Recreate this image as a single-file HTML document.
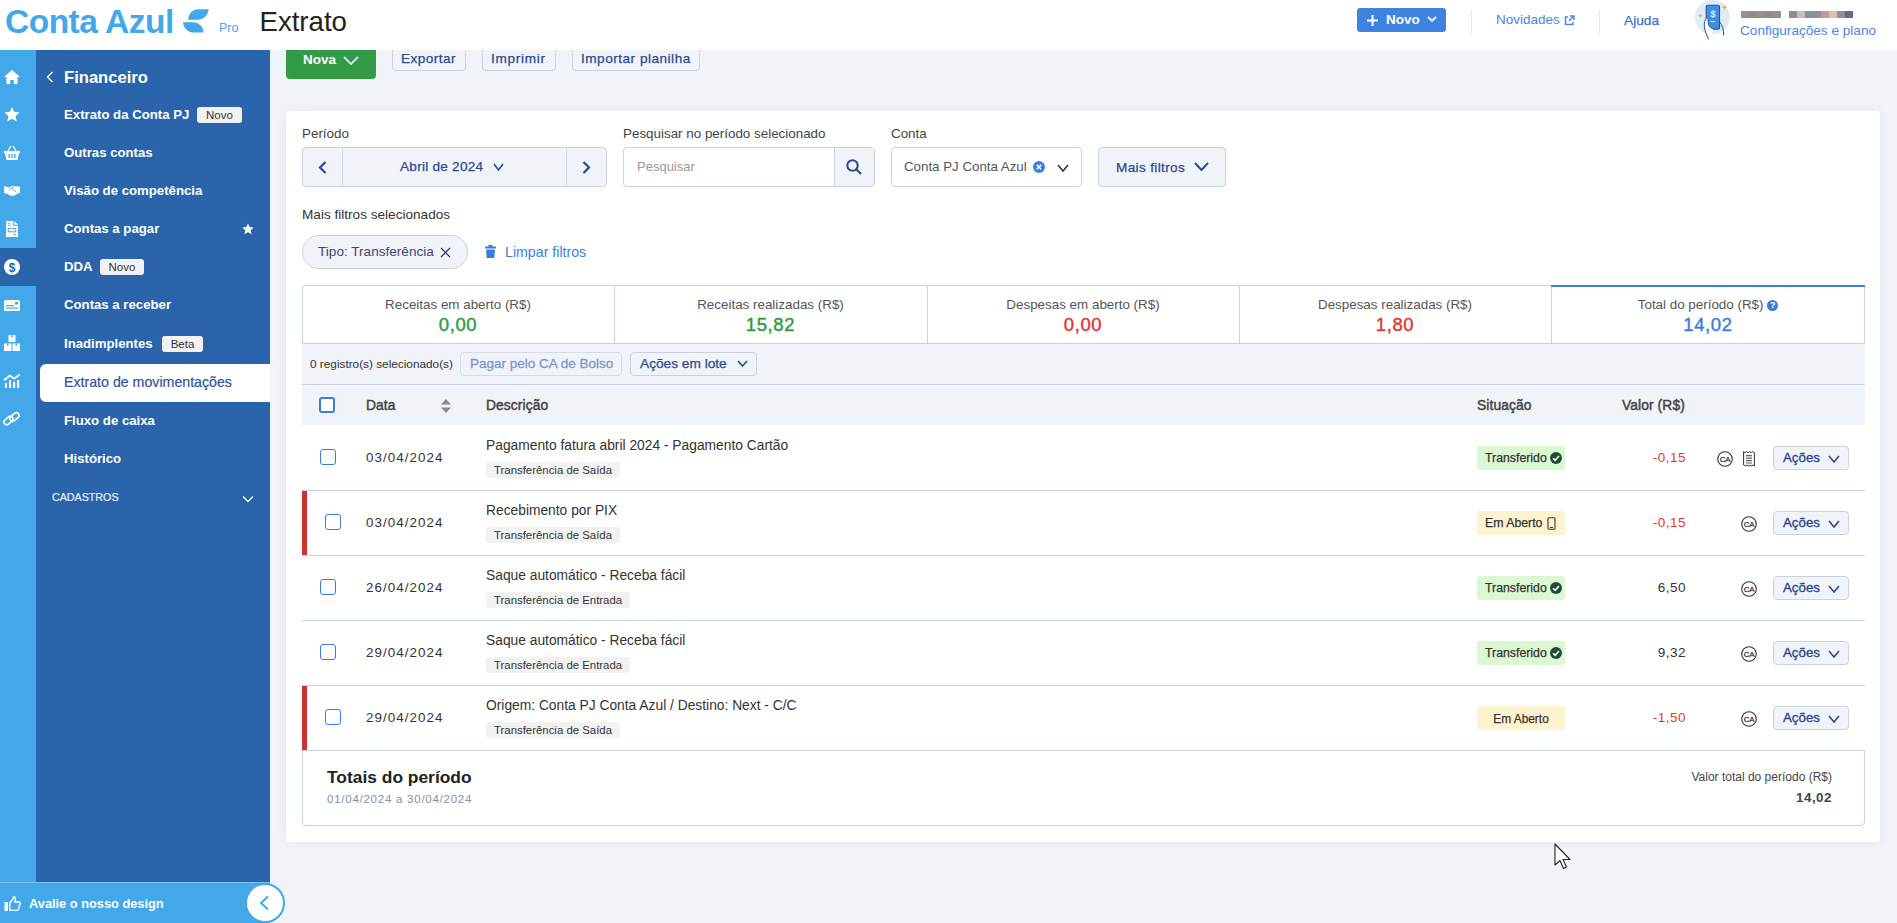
<!DOCTYPE html>
<html><head><meta charset="utf-8">
<style>
*{box-sizing:border-box;margin:0;padding:0}
html,body{width:1897px;height:923px;overflow:hidden;background:#f0f3f8;font-family:"Liberation Sans",sans-serif;color:#333}
.a{position:absolute}
.nw{white-space:nowrap}
svg{display:block}
/* header */
#hdr{left:0;top:0;width:1897px;height:50px;background:#fff;z-index:5}
/* rail */
#rail{left:0;top:50px;width:36px;height:832px;background:#42a8ea}
#side{left:36px;top:50px;width:234px;height:832px;background:#2a64ab}
.mi{position:absolute;left:28px;color:#fff;font-weight:700;font-size:13.2px;line-height:16px;white-space:nowrap}
.bdg{position:absolute;height:16px;background:#f2f2f2;border-radius:3px;color:#333;font-size:11.5px;font-weight:400;line-height:16px;text-align:center}
#bot{left:0;top:882px;width:270px;height:41px;background:#42a8ea;border-top:1px solid #7cc3f1}
.btn2{position:absolute;background:#f0f3f8;border:1px solid #c8d2e0;border-radius:4px;color:#2b4a8f;font-weight:700;font-size:13px;text-align:center}
.lbl{position:absolute;font-size:13.4px;color:#444;line-height:16px;white-space:nowrap}
.tile{position:absolute;top:0;height:58px;border-right:1px solid #c8d2e0;text-align:center}
.tl{position:absolute;left:0;right:0;top:10px;font-size:13.4px;color:#555;line-height:16px}
.tv{position:absolute;left:0;right:0;top:27px;font-size:18.5px;line-height:22px}
.row{position:absolute;left:302px;width:1563px;height:65px;border-bottom:1px solid #c8d2e0;background:#fff}
.cb{position:absolute;width:16px;height:16px;border:1.5px solid #3b7ddd;border-radius:3px;background:#fff}
.dt{position:absolute;left:64px;top:24px;font-size:13px;letter-spacing:1.2px;color:#333;line-height:16px}
.ds{position:absolute;left:184px;top:12px;font-size:13.9px;color:#333;line-height:16px;white-space:nowrap}
.tg{position:absolute;left:184px;top:37px;height:15px;background:#f2f2f2;border-radius:3px;font-size:11.3px;color:#333;line-height:15px;padding:0 8px;white-space:nowrap}
.st{position:absolute;left:1175px;top:21px;width:88px;height:24px;border-radius:3px;font-size:11.5px;color:#333;line-height:24px;white-space:nowrap;padding-left:8px}
.vl{position:absolute;right:181px;top:24px;font-size:13.5px;line-height:16px;color:#e03a2f;text-align:right}
.ac{position:absolute;left:1471px;top:21px;width:76px;height:24px;background:#f0f3f8;border:1px solid #c8d2e0;border-radius:4px;color:#2b4a8f;font-size:13.5px;line-height:22px;padding-left:9px}
.red{position:absolute;left:0;top:0;width:5px;height:65px;background:#d32f2f}
</style></head><body>

<!-- HEADER -->
<div id="hdr" class="a">
  <div class="a nw" style="left:5px;top:2px;font-size:33.5px;font-weight:700;color:#42a8ea;line-height:40px;letter-spacing:-0.5px">Conta Azul</div>
  <svg class="a" style="left:183px;top:9px" width="27" height="25" viewBox="0 0 27 25"><path d="M5.2 10.7 C5.3 4.5 9.5 0.3 15.5 0.3 L25.6 0.3 C25.2 6 21 10.7 15 10.7 Z" fill="#42a8ea"/><path d="M0 13.2 L10 13.2 C16 13.2 20.3 17.5 20.5 23.4 L10.5 23.4 C4.5 23.4 0.4 19 0 13.2 Z" fill="#42a8ea"/></svg>
  <div class="a nw" style="left:219px;top:20px;font-size:12.5px;color:#42a8ea;line-height:16px">Pro</div>
  <div class="a nw" style="left:259.5px;top:6px;font-size:27.6px;color:#222;line-height:32px">Extrato</div>

  <div class="a" style="left:1357px;top:8px;width:89px;height:24px;background:#3f83e0;border-radius:3px"></div>
  <svg class="a" style="left:1367px;top:15px" width="11" height="11" viewBox="0 0 11 11"><path d="M5.5 0 V11 M0 5.5 H11" stroke="#fff" stroke-width="2"/></svg>
  <div class="a nw" style="left:1386px;top:12px;font-size:13.5px;color:#fff;font-weight:700;line-height:16px">Novo</div>
  <svg class="a" style="left:1427px;top:16px" width="10" height="7" viewBox="0 0 10 7"><path d="M1 1 L5 5 L9 1" stroke="#fff" stroke-width="1.8" fill="none"/></svg>
  <div class="a" style="left:1471px;top:10px;width:1px;height:24px;background:#e4e8ef"></div>
  <div class="a nw" style="left:1496px;top:12px;font-size:13.5px;color:#4a86df;line-height:16px">Novidades</div>
  <svg class="a" style="left:1564px;top:15px" width="11" height="11" viewBox="0 0 11 11"><path d="M4 2 H1.5 V9.5 H9 V7" stroke="#4a86df" stroke-width="1.4" fill="none"/><path d="M6 1 H10 V5 M10 1 L5 6" stroke="#4a86df" stroke-width="1.4" fill="none"/></svg>
  <div class="a" style="left:1599px;top:10px;width:1px;height:24px;background:#e4e8ef"></div>
  <div class="a nw" style="left:1624px;top:12.5px;font-size:13.7px;color:#3b71c9;font-weight:400;-webkit-text-stroke:0.25px #3b71c9;line-height:16px">Ajuda</div>
  <!-- avatar -->
  <svg class="a" style="left:1680px;top:0px" width="50" height="42" viewBox="0 0 50 42">
    <circle cx="32.3" cy="17.2" r="17.4" fill="#dcedf9"/>
    <rect x="26.2" y="5.2" width="13.3" height="24" rx="1.5" fill="#3f8ee0" stroke="#2c4f9e" stroke-width="1.1"/>
    <text x="32.8" y="17" font-size="9.5" fill="#fff" text-anchor="middle" font-family="Liberation Sans">$</text>
    <rect x="30.5" y="21" width="4.5" height="1" fill="#cfe3f8"/>
    <path d="M28.5 39.5 L25.2 31 C23.8 27 24 22 25.8 18.5 C27 17.5 28.3 18.5 28.2 20 C27.8 23 28.5 26 30.5 27.5 L34 29.5" fill="#fff" stroke="#2c4f9e" stroke-width="1"/>
    <path d="M39.5 21.5 C42.5 25.5 43.8 30 43.6 35.5" fill="none" stroke="#2c4f9e" stroke-width="1"/>
    <path d="M44.6 4.5 l0.9 2 l2 0.9 l-2 0.9 l-0.9 2 l-0.9 -2 l-2 -0.9 l2 -0.9z M20.4 13.2 l0.8 1.6 l1.6 0.8 l-1.6 0.8 l-0.8 1.6 l-0.8 -1.6 l-1.6 -0.8 l1.6 -0.8z" fill="#f5b34a"/>
  </svg>
  <div class="a" style="left:1741px;top:11px;width:40px;height:7px;background:linear-gradient(90deg,#8f9099 0 20%,#958a86 20% 40%,#8f9099 40% 60%,#958a86 60% 80%,#8f9099 80%)"></div>
  <div class="a" style="left:1789px;top:11px;width:64px;height:7px;background:linear-gradient(90deg,#958a86 0 12.5%,#c0c0c4 12.5% 25%,#8f9099 25% 50%,#c09aa0 50% 62.5%,#ddc0b0 62.5% 75%,#8f9099 75% 87.5%,#676a80 87.5%)"></div>
  <div class="a nw" style="left:1740px;top:23px;font-size:13.6px;color:#4a86df;line-height:16px">Configurações e plano</div>
</div>

<!-- RAIL -->
<div id="rail" class="a">
  <div class="a" style="left:0;top:198px;width:36px;height:38px;background:#2a64ab"></div>
  <!-- home 70-84 -->
  <svg class="a" style="left:4px;top:20px" width="16" height="14" viewBox="0 0 16 14"><path d="M8 0 L16 7 L13.5 7 L13.5 14 L9.8 14 L9.8 10 L6.2 10 L6.2 14 L2.5 14 L2.5 7 L0 7 Z" fill="#fff"/></svg>
  <!-- star 108-122 -->
  <svg class="a" style="left:4px;top:57px" width="16" height="15" viewBox="0 0 16 15"><path d="M8 0 L10.2 4.8 L15.5 5.4 L11.6 9 L12.7 14.5 L8 11.8 L3.3 14.5 L4.4 9 L0.5 5.4 L5.8 4.8 Z" fill="#fff"/></svg>
  <!-- basket 146-160 -->
  <svg class="a" style="left:4px;top:95px" width="16" height="15" viewBox="0 0 16 15"><path d="M0 6 H16 V8 H15 L13.5 15 H2.5 L1 8 H0 Z" fill="#fff"/><path d="M4 6 L7 1 M12 6 L9 1" stroke="#fff" stroke-width="1.3"/><rect x="4.5" y="9" width="1.4" height="4" fill="#42a8ea"/><rect x="7.3" y="9" width="1.4" height="4" fill="#42a8ea"/><rect x="10.1" y="9" width="1.4" height="4" fill="#42a8ea"/></svg>
  <!-- handshake 185-196 -->
  <svg class="a" style="left:4px;top:136px" width="16" height="10" viewBox="0 0 16 10"><path d="M0 1.5 C0 0.6 0.8 0 1.8 0.4 L4.8 1.4 L7.8 0.1 L10.8 0.3 L14 0.4 C15 0.2 16 0.8 16 1.8 V6.2 C16 7.2 15.2 7.6 14.2 7.3 L10.3 9.4 C9.3 10 7.3 10 6.2 9.5 L3 7.5 C2 7.9 0 7.5 0 6.5 Z" fill="#fff"/><path d="M5.2 4 L8 1.8 L10 1.8 M8.6 2.8 L12.2 6.2" stroke="#42a8ea" stroke-width="0.9" fill="none"/></svg>
  <!-- doc 220-235 -->
  <svg class="a" style="left:6px;top:171px" width="12" height="16" viewBox="0 0 12 16"><path d="M0 0 H7.3 V4.7 H12 V16 H0 Z" fill="#fff"/><path d="M8.3 0 L12 3.7 H8.3 Z" fill="#fff"/><rect x="1.5" y="1.8" width="3" height="0.9" fill="#42a8ea"/><rect x="1.5" y="3.8" width="3" height="0.9" fill="#42a8ea"/><rect x="2.2" y="7.4" width="7.6" height="3.4" fill="none" stroke="#42a8ea" stroke-width="1"/><rect x="7" y="12.8" width="3" height="0.9" fill="#42a8ea"/></svg>
  <!-- dollar 259-275 -->
  <svg class="a" style="left:4px;top:209px" width="16" height="16" viewBox="0 0 16 16"><circle cx="8" cy="8" r="8" fill="#fff"/><text x="8" y="12.5" font-size="12" font-weight="700" text-anchor="middle" fill="#2a64ab" font-family="Liberation Sans">$</text></svg>
  <!-- card 300-311 -->
  <svg class="a" style="left:4px;top:250px" width="16" height="11" viewBox="0 0 16 11"><rect x="0" y="0" width="16" height="11" rx="1.5" fill="#fff"/><rect x="2" y="5" width="8" height="1.2" fill="#42a8ea"/><rect x="2" y="7.5" width="12" height="1.2" fill="#42a8ea"/><rect x="11" y="2" width="3" height="2.5" fill="#42a8ea"/></svg>
  <!-- boxes 335-351 -->
  <svg class="a" style="left:4px;top:285px" width="16" height="16" viewBox="0 0 16 16"><rect x="4.5" y="0" width="7" height="7" fill="#fff"/><rect x="0" y="8.5" width="7.5" height="7.5" fill="#fff"/><rect x="8.5" y="8.5" width="7.5" height="7.5" fill="#fff"/><rect x="7.3" y="0" width="1.4" height="2.5" fill="#42a8ea"/><rect x="3" y="8.5" width="1.4" height="2.5" fill="#42a8ea"/><rect x="11.5" y="8.5" width="1.4" height="2.5" fill="#42a8ea"/></svg>
  <!-- chart 373-389 -->
  <svg class="a" style="left:3px;top:323px" width="18" height="16" viewBox="0 0 18 16"><path d="M1 7.2 L6.9 2.6 L11.1 5.7 L16.7 1.5" stroke="#fff" stroke-width="1.8" fill="none"/><rect x="1.9" y="10.2" width="2.1" height="4.8" fill="#fff"/><rect x="6" y="7.2" width="2.1" height="7.8" fill="#fff"/><rect x="10" y="8.9" width="2.2" height="6.1" fill="#fff"/><rect x="14" y="7.2" width="2.2" height="7.8" fill="#fff"/></svg>
  <!-- link 413-424 -->
  <svg class="a" style="left:3px;top:361px" width="18" height="16" viewBox="0 0 18 16"><g fill="none" stroke="#fff" stroke-width="1.6"><rect x="0.5" y="6.8" width="10" height="5.4" rx="2.7" transform="rotate(-40 5.5 9.5)"/><rect x="6.5" y="3.3" width="10" height="5.4" rx="2.7" transform="rotate(-40 11.5 6)"/></g></svg>
</div>

<!-- SIDEBAR -->
<div id="side" class="a">
  <svg class="a" style="left:10px;top:21px" width="8" height="12" viewBox="0 0 8 12"><path d="M6.5 1 L1.5 6 L6.5 11" stroke="#fff" stroke-width="1.3" fill="none"/></svg>
  <div class="a nw" style="left:28px;top:17.5px;font-size:16.6px;font-weight:700;color:#fff;line-height:20px">Financeiro</div>
  <div class="mi" style="top:56.5px">Extrato da Conta PJ</div>
  <div class="mi" style="top:94.5px">Outras contas</div>
  <div class="mi" style="top:132.5px">Vis&atilde;o de compet&ecirc;ncia</div>
  <div class="mi" style="top:170.5px">Contas a pagar</div>
  <div class="mi" style="top:208.5px">DDA</div>
  <div class="mi" style="top:246.5px">Contas a receber</div>
  <div class="mi" style="top:285.5px">Inadimplentes</div>
  <div class="mi" style="top:362.5px">Fluxo de caixa</div>
  <div class="mi" style="top:400.5px">Hist&oacute;rico</div>
  <div class="a" style="left:4px;top:314px;width:230px;height:38px;background:#fff;border-radius:6px 0 0 6px"></div>
  <div class="mi" style="top:323.5px;color:#2f5596;font-weight:400;font-size:14.2px;-webkit-text-stroke:0.2px #2f5596">Extrato de movimenta&ccedil;&otilde;es</div>
  <div class="bdg" style="left:161px;top:57px;width:45px">Novo</div>
  <div class="bdg" style="left:64px;top:209px;width:44px">Novo</div>
  <div class="bdg" style="left:126px;top:286px;width:41px">Beta</div>
  <svg class="a" style="left:206px;top:173px" width="12" height="12" viewBox="0 0 16 15"><path d="M8 0 L10.2 4.8 L15.5 5.4 L11.6 9 L12.7 14.5 L8 11.8 L3.3 14.5 L4.4 9 L0.5 5.4 L5.8 4.8 Z" fill="#fff"/></svg>
  <div class="a nw" style="left:16px;top:440px;font-size:10.7px;color:#e6eefa;line-height:14px;-webkit-text-stroke:0.2px #e6eefa">CADASTROS</div>
  <svg class="a" style="left:206px;top:445px" width="12" height="8" viewBox="0 0 12 8"><path d="M1 1.5 L6 6.5 L11 1.5" stroke="#fff" stroke-width="1.3" fill="none"/></svg>
</div>

<!-- BOTTOM BAR -->
<div id="bot" class="a">
  <svg class="a" style="left:4px;top:13px" width="17" height="15" viewBox="0 0 17 15"><rect x="0.5" y="6" width="3.5" height="9" fill="#fff"/><path d="M5.8 7 L9 3 L9.5 0.8 C11 0.8 11.8 2 11.2 4.5 L10.7 6 H15 C16 6 16.5 7 16 8 L14.3 13.5 C14 14.2 13.5 14.5 12.8 14.5 H5.8 Z" fill="none" stroke="#fff" stroke-width="1.4" stroke-linejoin="round"/></svg>
  <div class="a nw" style="left:29px;top:12.5px;font-size:12.8px;font-weight:700;color:#fff;line-height:16px">Avalie o nosso design</div>
</div>
<div class="a" style="left:244.5px;top:883px;width:40px;height:40px;border-radius:50%;background:#fff;border:2px solid #42a8ea"></div>
<svg class="a" style="left:258px;top:895px" width="12" height="16" viewBox="0 0 12 16"><path d="M10 1.5 L3 8 L10 14.5" stroke="#42a8ea" stroke-width="2" fill="none"/></svg>

<!-- MAIN -->
<div class="a" style="left:286px;top:38px;width:90px;height:41px;background:#339a48;border-radius:4px"></div>
<div class="a nw" style="left:303px;top:51.5px;font-size:13.5px;font-weight:700;color:#fff;line-height:16px">Nova</div>
<svg class="a" style="left:343px;top:56px" width="16" height="9" viewBox="0 0 16 9"><path d="M1 1 L8.0 8 L15 1" stroke="#fff" stroke-width="1.6" fill="none"/></svg>
<div class="a" style="left:392px;top:38px;width:74px;height:33px;background:#f0f3f8;border:1px solid #c8d2e0;border-radius:4px"></div>
<div class="a nw" style="left:401px;top:50.5px;font-size:13.6px;font-weight:400;-webkit-text-stroke:0.25px #2b4a8f;letter-spacing:0.45px;color:#2b4a8f;line-height:16px">Exportar</div>
<div class="a" style="left:482px;top:38px;width:74px;height:33px;background:#f0f3f8;border:1px solid #c8d2e0;border-radius:4px"></div>
<div class="a nw" style="left:491px;top:50.5px;font-size:13.6px;font-weight:400;-webkit-text-stroke:0.25px #2b4a8f;letter-spacing:0.7px;color:#2b4a8f;line-height:16px">Imprimir</div>
<div class="a" style="left:572px;top:38px;width:128px;height:33px;background:#f0f3f8;border:1px solid #c8d2e0;border-radius:4px"></div>
<div class="a nw" style="left:581px;top:50.5px;font-size:13.6px;font-weight:400;-webkit-text-stroke:0.25px #2b4a8f;letter-spacing:0.5px;color:#2b4a8f;line-height:16px">Importar planilha</div>
<div class="a" style="left:286px;top:111px;width:1594px;height:731px;background:#fff;border-radius:4px;box-shadow:0 0 14px rgba(40,60,100,0.05)"></div>
<div class="lbl" style="left:302px;top:126px">Per&iacute;odo</div>
<div class="lbl" style="left:623px;top:126px">Pesquisar no per&iacute;odo selecionado</div>
<div class="lbl" style="left:891px;top:126px">Conta</div>
<div class="a" style="left:302px;top:147px;width:305px;height:40px;background:#f0f3f8;border:1px solid #c8d2e0;border-radius:4px"></div>
<div class="a" style="left:342px;top:148px;width:1px;height:38px;background:#c8d2e0"></div>
<div class="a" style="left:566px;top:148px;width:1px;height:38px;background:#c8d2e0"></div>
<svg class="a" style="left:318px;top:161px" width="9" height="13" viewBox="0 0 9 13"><path d="M7.5 1 L2 6.5 L7.5 12" stroke="#2b4a8f" stroke-width="2.2" fill="none"/></svg>
<svg class="a" style="left:582px;top:161px" width="9" height="13" viewBox="0 0 9 13"><path d="M1.5 1 L7 6.5 L1.5 12" stroke="#2b4a8f" stroke-width="2.2" fill="none"/></svg>
<div class="a nw" style="left:400px;top:158.5px;font-size:13.6px;font-weight:400;-webkit-text-stroke:0.25px #2b4a8f;color:#2b4a8f;line-height:16px;letter-spacing:0.25px">Abril de 2024</div>
<svg class="a" style="left:493px;top:163px" width="11" height="8" viewBox="0 0 11 8"><path d="M1 1 L5.5 7 L10 1" stroke="#2b4a8f" stroke-width="1.6" fill="none"/></svg>
<div class="a" style="left:623px;top:147px;width:252px;height:40px;background:#fff;border:1px solid #c8d2e0;border-radius:4px"></div>
<div class="a" style="left:834px;top:148px;width:40px;height:38px;background:#f0f3f8;border-left:1px solid #c8d2e0;border-radius:0 3px 3px 0"></div>
<div class="a nw" style="left:637px;top:158.5px;font-size:13px;color:#999;line-height:16px">Pesquisar</div>
<svg class="a" style="left:846px;top:159px" width="16" height="16" viewBox="0 0 16 16"><circle cx="6.5" cy="6.5" r="5.2" stroke="#2b4a8f" stroke-width="2" fill="none"/><path d="M10.3 10.3 L15 15" stroke="#2b4a8f" stroke-width="2.2"/></svg>
<div class="a" style="left:891px;top:147px;width:191px;height:40px;background:#fff;border:1px solid #c8d2e0;border-radius:4px"></div>
<div class="a nw" style="left:904px;top:158.5px;font-size:13.3px;color:#555;line-height:16px">Conta PJ Conta Azul</div>
<svg class="a" style="left:1033px;top:161px" width="12" height="12" viewBox="0 0 12 12"><circle cx="6" cy="6" r="6" fill="#3b7ddd"/><path d="M3.8 3.8 L8.2 8.2 M8.2 3.8 L3.8 8.2" stroke="#fff" stroke-width="1.6"/></svg>
<svg class="a" style="left:1057px;top:164px" width="12" height="8" viewBox="0 0 12 8"><path d="M1 1 L6.0 7 L11 1" stroke="#333" stroke-width="1.6" fill="none"/></svg>
<div class="a" style="left:1098px;top:147px;width:128px;height:40px;background:#f0f3f8;border:1px solid #c8d2e0;border-radius:4px"></div>
<div class="a nw" style="left:1116px;top:160px;font-size:13.6px;font-weight:400;-webkit-text-stroke:0.25px #2b4a8f;letter-spacing:0.35px;color:#2b4a8f;line-height:16px">Mais filtros</div>
<svg class="a" style="left:1194px;top:162px" width="15" height="9" viewBox="0 0 15 9"><path d="M1 1 L7.5 8 L14 1" stroke="#2b4a8f" stroke-width="2" fill="none"/></svg>
<div class="lbl" style="left:302px;top:207px;font-size:13.6px;color:#333">Mais filtros selecionados</div>
<div class="a" style="left:302px;top:235px;width:166px;height:34px;background:#f0f3f8;border:1px solid #c8d2e0;border-radius:17px"></div>
<div class="a nw" style="left:318px;top:244px;font-size:13.6px;color:#3d4a6b;line-height:16px">Tipo: Transfer&ecirc;ncia</div>
<svg class="a" style="left:440px;top:247px" width="11" height="11" viewBox="0 0 11 11"><path d="M1 1 L10 10 M10 1 L1 10" stroke="#2b3a6b" stroke-width="1.25"/></svg>
<svg class="a" style="left:485px;top:245px" width="11" height="13" viewBox="0 0 11 13"><rect x="0" y="1.5" width="11" height="2" fill="#3b7ddd"/><rect x="3.5" y="0" width="4" height="2" fill="#3b7ddd"/><path d="M1 4.5 H10 L9.3 13 H1.7 Z" fill="#3b7ddd"/></svg>
<div class="a nw" style="left:505px;top:244px;font-size:14.2px;color:#3b7ddd;line-height:16px">Limpar filtros</div>
<div class="a" style="left:302px;top:285px;width:1563px;height:59px;border:1px solid #c8d2e0;border-radius:3px 3px 0 0;background:#fff"></div>
<div class="a nw" style="left:302px;width:312px;top:296.5px;text-align:center;font-size:13.4px;color:#555;line-height:16px">Receitas em aberto (R$)</div>
<div class="a nw" style="left:302px;width:312px;top:313.5px;text-align:center;font-size:18.5px;color:#2e9a3f;line-height:22px;letter-spacing:0.6px;-webkit-text-stroke:0.4px #2e9a3f">0,00</div>
<div class="a" style="left:614px;top:286px;width:1px;height:57px;background:#c8d2e0"></div>
<div class="a nw" style="left:614px;width:313px;top:296.5px;text-align:center;font-size:13.4px;color:#555;line-height:16px">Receitas realizadas (R$)</div>
<div class="a nw" style="left:614px;width:313px;top:313.5px;text-align:center;font-size:18.5px;color:#2e9a3f;line-height:22px;letter-spacing:0.6px;-webkit-text-stroke:0.4px #2e9a3f">15,82</div>
<div class="a" style="left:927px;top:286px;width:1px;height:57px;background:#c8d2e0"></div>
<div class="a nw" style="left:927px;width:312px;top:296.5px;text-align:center;font-size:13.4px;color:#555;line-height:16px">Despesas em aberto (R$)</div>
<div class="a nw" style="left:927px;width:312px;top:313.5px;text-align:center;font-size:18.5px;color:#d93a2f;line-height:22px;letter-spacing:0.6px;-webkit-text-stroke:0.4px #d93a2f">0,00</div>
<div class="a" style="left:1239px;top:286px;width:1px;height:57px;background:#c8d2e0"></div>
<div class="a nw" style="left:1239px;width:312px;top:296.5px;text-align:center;font-size:13.4px;color:#555;line-height:16px">Despesas realizadas (R$)</div>
<div class="a nw" style="left:1239px;width:312px;top:313.5px;text-align:center;font-size:18.5px;color:#d93a2f;line-height:22px;letter-spacing:0.6px;-webkit-text-stroke:0.4px #d93a2f">1,80</div>
<div class="a" style="left:1551px;top:286px;width:1px;height:57px;background:#c8d2e0"></div>
<div class="a nw" style="left:1551px;width:314px;top:296.5px;text-align:center;font-size:13.4px;color:#555;line-height:16px">Total do per&iacute;odo (R$) <span style="display:inline-block;width:11px;height:11px;border-radius:50%;background:#3b7ddd;color:#fff;font-size:9px;line-height:11px;font-weight:700;vertical-align:1px;text-align:center">?</span></div>
<div class="a nw" style="left:1551px;width:314px;top:313.5px;text-align:center;font-size:18.5px;color:#3b7ddd;line-height:22px;letter-spacing:0.6px;-webkit-text-stroke:0.4px #3b7ddd">14,02</div>
<div class="a" style="left:1551px;top:285px;width:314px;height:2px;background:#3b7ddd"></div>
<div class="a" style="left:302px;top:344px;width:1563px;height:41px;background:#f0f3f8;border-bottom:1px solid #c8d2e0"></div>
<div class="a nw" style="left:310px;top:355.5px;font-size:11.8px;color:#333;line-height:16px">0 registro(s) selecionado(s)</div>
<div class="a" style="left:460px;top:352px;width:162px;height:24px;background:#f0f3f8;border:1px solid #d5dce8;border-radius:4px"></div>
<div class="a nw" style="left:470px;top:356px;font-size:13.5px;color:#7d97cc;line-height:16px;font-weight:400;-webkit-text-stroke:0.3px #7d97cc">Pagar pelo CA de Bolso</div>
<div class="a" style="left:630px;top:352px;width:127px;height:24px;background:#f0f3f8;border:1px solid #c8d2e0;border-radius:4px"></div>
<div class="a nw" style="left:640px;top:356px;font-size:13.7px;color:#2b4a8f;line-height:16px;font-weight:400;-webkit-text-stroke:0.25px #2b4a8f">A&ccedil;&otilde;es em lote</div>
<svg class="a" style="left:737px;top:360px" width="11" height="7" viewBox="0 0 11 7"><path d="M1 1 L5.5 6 L10 1" stroke="#2b4a8f" stroke-width="1.6" fill="none"/></svg>
<div class="a" style="left:302px;top:385px;width:1563px;height:40px;background:#f0f3f8"></div>
<div class="cb" style="left:319px;top:397px;border-width:2px"></div>
<div class="a nw" style="left:366px;top:398px;font-size:13.8px;font-weight:400;-webkit-text-stroke:0.45px #444;letter-spacing:0.1px;color:#444;line-height:16px">Data</div>
<svg class="a" style="left:441px;top:399px" width="10" height="14" viewBox="0 0 10 14"><path d="M5 0 L10 5.5 H0 Z M0 8.5 H10 L5 14 Z" fill="#888a94"/></svg>
<div class="a nw" style="left:486px;top:398px;font-size:13.8px;font-weight:400;-webkit-text-stroke:0.45px #444;letter-spacing:0.1px;color:#444;line-height:16px">Descri&ccedil;&atilde;o</div>
<div class="a nw" style="left:1477px;top:398px;font-size:13.8px;font-weight:400;-webkit-text-stroke:0.45px #444;letter-spacing:0.1px;color:#444;line-height:16px">Situa&ccedil;&atilde;o</div>
<div class="a nw" style="left:1622px;top:398px;font-size:13.8px;font-weight:400;-webkit-text-stroke:0.45px #444;letter-spacing:0.1px;color:#444;line-height:16px">Valor (R$)</div>
<div class="a" style="left:302px;top:426px;width:1563px;height:65px;background:#fff;border-bottom:1px solid #c8d2e0"></div>
<div class="cb" style="left:320px;top:449px"></div>
<div class="a nw" style="left:366px;top:449.5px;font-size:13.4px;letter-spacing:1.05px;color:#333;line-height:16px">03/04/2024</div>
<div class="a nw" style="left:486px;top:438px;font-size:13.8px;color:#333;line-height:16px">Pagamento fatura abril 2024 - Pagamento Cart&atilde;o</div>
<div class="a nw" style="left:486px;top:462px;height:16px;background:#f2f2f2;border-radius:3px;font-size:11.4px;color:#333;line-height:16px;padding:0 8px">Transfer&ecirc;ncia de Sa&iacute;da</div>
<div class="a nw" style="left:1477px;top:446px;width:88px;height:24px;background:#dcf8d3;border-radius:3px"></div>
<div class="a nw" style="left:1485px;top:450px;font-size:12.3px;color:#333;line-height:16px;font-weight:400;-webkit-text-stroke:0.25px #333">Transferido</div>
<svg class="a" style="left:1550px;top:452px" width="12" height="12" viewBox="0 0 12 12"><circle cx="6" cy="6" r="6" fill="#234a3c"/><path d="M3 6.2 L5.2 8.3 L9 4" stroke="#fff" stroke-width="1.5" fill="none"/></svg>
<div class="a nw" style="left:1586px;width:100px;text-align:right;top:450px;font-size:13.5px;color:#e03a2f;line-height:16px;letter-spacing:0.5px">-0,15</div>
<svg class="a" style="left:1717px;top:451px" width="16" height="16" viewBox="0 0 16 16"><circle cx="8" cy="8" r="7.3" stroke="#333" stroke-width="1.1" fill="none"/><text x="8" y="11" font-size="8" text-anchor="middle" fill="#333" font-family="Liberation Sans" font-weight="400" stroke="#333" stroke-width="0.25" letter-spacing="-0.3">CA</text></svg>
<svg class="a" style="left:1743px;top:451px" width="12" height="16" viewBox="0 0 12 16"><path d="M0.6 0.6 L2 1.6 L3.5 0.6 L5 1.6 L6.5 0.6 L8 1.6 L9.5 0.6 L11.4 1.6 V15 L10 14 L8.5 15 L7 14 L5.5 15 L4 14 L2.5 15 L0.6 14 Z" stroke="#333" stroke-width="1" fill="none"/><rect x="3" y="4" width="6" height="1.3" fill="#666"/><rect x="3" y="6.5" width="6" height="1.3" fill="#666"/><rect x="3" y="9" width="6" height="1.3" fill="#666"/><rect x="3" y="11.5" width="6" height="1" fill="#666"/></svg>
<div class="a" style="left:1773px;top:446px;width:76px;height:24px;background:#f0f3f8;border:1px solid #c8d2e0;border-radius:4px"></div>
<div class="a nw" style="left:1783px;top:449.5px;font-size:13.3px;color:#2b4a8f;line-height:16px;font-weight:400;-webkit-text-stroke:0.35px #2b4a8f">A&ccedil;&otilde;es</div>
<svg class="a" style="left:1828px;top:455px" width="12" height="8" viewBox="0 0 12 8"><path d="M1 1 L6.0 7 L11 1" stroke="#2b4a8f" stroke-width="1.6" fill="none"/></svg>
<div class="a" style="left:302px;top:491px;width:1563px;height:65px;background:#fff;border-bottom:1px solid #c8d2e0"></div>
<div class="a" style="left:302px;top:491px;width:5px;height:64px;background:#d32f2f"></div>
<div class="cb" style="left:325px;top:514px"></div>
<div class="a nw" style="left:366px;top:514.5px;font-size:13.4px;letter-spacing:1.05px;color:#333;line-height:16px">03/04/2024</div>
<div class="a nw" style="left:486px;top:503px;font-size:13.8px;color:#333;line-height:16px">Recebimento por PIX</div>
<div class="a nw" style="left:486px;top:527px;height:16px;background:#f2f2f2;border-radius:3px;font-size:11.4px;color:#333;line-height:16px;padding:0 8px">Transfer&ecirc;ncia de Sa&iacute;da</div>
<div class="a nw" style="left:1477px;top:511px;width:88px;height:24px;background:#fdf3cf;border-radius:3px"></div>
<div class="a nw" style="left:1485px;top:515px;font-size:12.3px;color:#333;line-height:16px;-webkit-text-stroke:0.25px #333">Em Aberto</div>
<svg class="a" style="left:1547px;top:517px" width="9" height="13" viewBox="0 0 9 13"><rect x="1" y="0.8" width="7" height="11.4" rx="1" stroke="#333" stroke-width="1.1" fill="none"/><rect x="3" y="10" width="3" height="1" fill="#333"/></svg>
<div class="a nw" style="left:1586px;width:100px;text-align:right;top:515px;font-size:13.5px;color:#e03a2f;line-height:16px;letter-spacing:0.5px">-0,15</div>
<svg class="a" style="left:1741px;top:516px" width="16" height="16" viewBox="0 0 16 16"><circle cx="8" cy="8" r="7.3" stroke="#333" stroke-width="1.1" fill="none"/><text x="8" y="11" font-size="8" text-anchor="middle" fill="#333" font-family="Liberation Sans" font-weight="400" stroke="#333" stroke-width="0.25" letter-spacing="-0.3">CA</text></svg>
<div class="a" style="left:1773px;top:511px;width:76px;height:24px;background:#f0f3f8;border:1px solid #c8d2e0;border-radius:4px"></div>
<div class="a nw" style="left:1783px;top:514.5px;font-size:13.3px;color:#2b4a8f;line-height:16px;font-weight:400;-webkit-text-stroke:0.35px #2b4a8f">A&ccedil;&otilde;es</div>
<svg class="a" style="left:1828px;top:520px" width="12" height="8" viewBox="0 0 12 8"><path d="M1 1 L6.0 7 L11 1" stroke="#2b4a8f" stroke-width="1.6" fill="none"/></svg>
<div class="a" style="left:302px;top:556px;width:1563px;height:65px;background:#fff;border-bottom:1px solid #c8d2e0"></div>
<div class="cb" style="left:320px;top:579px"></div>
<div class="a nw" style="left:366px;top:579.5px;font-size:13.4px;letter-spacing:1.05px;color:#333;line-height:16px">26/04/2024</div>
<div class="a nw" style="left:486px;top:568px;font-size:13.8px;color:#333;line-height:16px">Saque autom&aacute;tico - Receba f&aacute;cil</div>
<div class="a nw" style="left:486px;top:592px;height:16px;background:#f2f2f2;border-radius:3px;font-size:11.4px;color:#333;line-height:16px;padding:0 8px">Transfer&ecirc;ncia de Entrada</div>
<div class="a nw" style="left:1477px;top:576px;width:88px;height:24px;background:#dcf8d3;border-radius:3px"></div>
<div class="a nw" style="left:1485px;top:580px;font-size:12.3px;color:#333;line-height:16px;font-weight:400;-webkit-text-stroke:0.25px #333">Transferido</div>
<svg class="a" style="left:1550px;top:582px" width="12" height="12" viewBox="0 0 12 12"><circle cx="6" cy="6" r="6" fill="#234a3c"/><path d="M3 6.2 L5.2 8.3 L9 4" stroke="#fff" stroke-width="1.5" fill="none"/></svg>
<div class="a nw" style="left:1586px;width:100px;text-align:right;top:580px;font-size:13.5px;color:#333;line-height:16px;letter-spacing:0.5px">6,50</div>
<svg class="a" style="left:1741px;top:581px" width="16" height="16" viewBox="0 0 16 16"><circle cx="8" cy="8" r="7.3" stroke="#333" stroke-width="1.1" fill="none"/><text x="8" y="11" font-size="8" text-anchor="middle" fill="#333" font-family="Liberation Sans" font-weight="400" stroke="#333" stroke-width="0.25" letter-spacing="-0.3">CA</text></svg>
<div class="a" style="left:1773px;top:576px;width:76px;height:24px;background:#f0f3f8;border:1px solid #c8d2e0;border-radius:4px"></div>
<div class="a nw" style="left:1783px;top:579.5px;font-size:13.3px;color:#2b4a8f;line-height:16px;font-weight:400;-webkit-text-stroke:0.35px #2b4a8f">A&ccedil;&otilde;es</div>
<svg class="a" style="left:1828px;top:585px" width="12" height="8" viewBox="0 0 12 8"><path d="M1 1 L6.0 7 L11 1" stroke="#2b4a8f" stroke-width="1.6" fill="none"/></svg>
<div class="a" style="left:302px;top:621px;width:1563px;height:65px;background:#fff;border-bottom:1px solid #c8d2e0"></div>
<div class="cb" style="left:320px;top:644px"></div>
<div class="a nw" style="left:366px;top:644.5px;font-size:13.4px;letter-spacing:1.05px;color:#333;line-height:16px">29/04/2024</div>
<div class="a nw" style="left:486px;top:633px;font-size:13.8px;color:#333;line-height:16px">Saque autom&aacute;tico - Receba f&aacute;cil</div>
<div class="a nw" style="left:486px;top:657px;height:16px;background:#f2f2f2;border-radius:3px;font-size:11.4px;color:#333;line-height:16px;padding:0 8px">Transfer&ecirc;ncia de Entrada</div>
<div class="a nw" style="left:1477px;top:641px;width:88px;height:24px;background:#dcf8d3;border-radius:3px"></div>
<div class="a nw" style="left:1485px;top:645px;font-size:12.3px;color:#333;line-height:16px;font-weight:400;-webkit-text-stroke:0.25px #333">Transferido</div>
<svg class="a" style="left:1550px;top:647px" width="12" height="12" viewBox="0 0 12 12"><circle cx="6" cy="6" r="6" fill="#234a3c"/><path d="M3 6.2 L5.2 8.3 L9 4" stroke="#fff" stroke-width="1.5" fill="none"/></svg>
<div class="a nw" style="left:1586px;width:100px;text-align:right;top:645px;font-size:13.5px;color:#333;line-height:16px;letter-spacing:0.5px">9,32</div>
<svg class="a" style="left:1741px;top:646px" width="16" height="16" viewBox="0 0 16 16"><circle cx="8" cy="8" r="7.3" stroke="#333" stroke-width="1.1" fill="none"/><text x="8" y="11" font-size="8" text-anchor="middle" fill="#333" font-family="Liberation Sans" font-weight="400" stroke="#333" stroke-width="0.25" letter-spacing="-0.3">CA</text></svg>
<div class="a" style="left:1773px;top:641px;width:76px;height:24px;background:#f0f3f8;border:1px solid #c8d2e0;border-radius:4px"></div>
<div class="a nw" style="left:1783px;top:644.5px;font-size:13.3px;color:#2b4a8f;line-height:16px;font-weight:400;-webkit-text-stroke:0.35px #2b4a8f">A&ccedil;&otilde;es</div>
<svg class="a" style="left:1828px;top:650px" width="12" height="8" viewBox="0 0 12 8"><path d="M1 1 L6.0 7 L11 1" stroke="#2b4a8f" stroke-width="1.6" fill="none"/></svg>
<div class="a" style="left:302px;top:686px;width:1563px;height:65px;background:#fff;border-bottom:1px solid #c8d2e0"></div>
<div class="a" style="left:302px;top:686px;width:5px;height:64px;background:#d32f2f"></div>
<div class="cb" style="left:325px;top:709px"></div>
<div class="a nw" style="left:366px;top:709.5px;font-size:13.4px;letter-spacing:1.05px;color:#333;line-height:16px">29/04/2024</div>
<div class="a nw" style="left:486px;top:698px;font-size:13.8px;color:#333;line-height:16px">Origem: Conta PJ Conta Azul / Destino: Next - C/C</div>
<div class="a nw" style="left:486px;top:722px;height:16px;background:#f2f2f2;border-radius:3px;font-size:11.4px;color:#333;line-height:16px;padding:0 8px">Transfer&ecirc;ncia de Sa&iacute;da</div>
<div class="a nw" style="left:1477px;top:706px;width:88px;height:24px;background:#fdf3cf;border-radius:3px"></div>
<div class="a nw" style="left:1477px;width:88px;text-align:center;top:710.5px;font-size:11.9px;color:#3a3330;line-height:16px;-webkit-text-stroke:0.25px #3a3330">Em Aberto</div>
<div class="a nw" style="left:1586px;width:100px;text-align:right;top:710px;font-size:13.5px;color:#e03a2f;line-height:16px;letter-spacing:0.5px">-1,50</div>
<svg class="a" style="left:1741px;top:711px" width="16" height="16" viewBox="0 0 16 16"><circle cx="8" cy="8" r="7.3" stroke="#333" stroke-width="1.1" fill="none"/><text x="8" y="11" font-size="8" text-anchor="middle" fill="#333" font-family="Liberation Sans" font-weight="400" stroke="#333" stroke-width="0.25" letter-spacing="-0.3">CA</text></svg>
<div class="a" style="left:1773px;top:706px;width:76px;height:24px;background:#f0f3f8;border:1px solid #c8d2e0;border-radius:4px"></div>
<div class="a nw" style="left:1783px;top:709.5px;font-size:13.3px;color:#2b4a8f;line-height:16px;font-weight:400;-webkit-text-stroke:0.35px #2b4a8f">A&ccedil;&otilde;es</div>
<svg class="a" style="left:1828px;top:715px" width="12" height="8" viewBox="0 0 12 8"><path d="M1 1 L6.0 7 L11 1" stroke="#2b4a8f" stroke-width="1.6" fill="none"/></svg>
<div class="a" style="left:302px;top:750px;width:1563px;height:76px;border:1px solid #c8d2e0;border-radius:0 0 4px 4px;background:#fff"></div>
<div class="a nw" style="left:327px;top:767px;font-size:17.4px;font-weight:700;color:#222;line-height:20px">Totais do per&iacute;odo</div>
<div class="a nw" style="left:327px;top:791px;font-size:11.5px;color:#8a8f99;line-height:16px;letter-spacing:0.75px">01/04/2024 a 30/04/2024</div>
<div class="a nw" style="left:1632px;width:200px;text-align:right;top:769px;font-size:12px;color:#444;line-height:16px">Valor total do per&iacute;odo (R$)</div>
<div class="a nw" style="left:1632px;width:200px;text-align:right;top:790px;font-size:13.4px;font-weight:700;color:#444;line-height:16px;letter-spacing:0.5px">14,02</div>
<svg class="a" style="left:1554px;top:843px" width="20" height="30" viewBox="0 0 20 30"><path d="M1 1 L1 22 L6 17.5 L9.5 25.5 L12.5 24 L9 16.5 L16 16.5 Z" fill="#fff" stroke="#222" stroke-width="1.1" stroke-linejoin="round"/></svg>
</body></html>
